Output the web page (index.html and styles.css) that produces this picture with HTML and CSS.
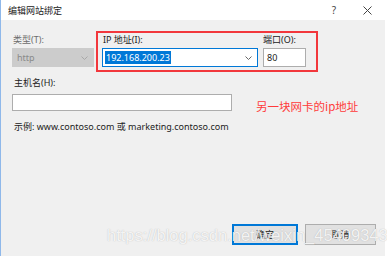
FILE: index.html
```html
<!DOCTYPE html>
<html>
<head>
<meta charset="utf-8">
<link rel="stylesheet" href="styles.css">
</head>
<body>
<div class="window">
  <div class="titlebar">
    <span class="title">编辑网站绑定</span>
    <span class="tb-btn help">?</span>
    <span class="tb-btn close">
      <svg width="9" height="9" viewBox="0 0 9 9"><path d="M0.5 0.5L8.5 8.5M8.5 0.5L0.5 8.5" stroke="#444" stroke-width="1"/></svg>
    </span>
  </div>
  <div class="content">
    <div class="row1">
      <div class="field type">
        <label>类型(T):</label>
        <div class="select disabled"><span>http</span>
          <svg class="chev" width="7" height="4" viewBox="0 0 7 4"><path d="M0.5 0.5L3.5 3.5L6.5 0.5" fill="none" stroke="#a8a8a8"/></svg>
        </div>
      </div>
      <div class="redbox">
        <div class="field ip">
          <label>IP 地址(I):</label>
          <div class="select active"><span class="sel">192.168.200.23</span>
            <svg class="chev" width="7" height="4" viewBox="0 0 7 4"><path d="M0.5 0.5L3.5 3.5L6.5 0.5" fill="none" stroke="#666"/></svg>
          </div>
        </div>
        <div class="field port">
          <label>端口(O):</label>
          <div class="input"><span>80</span></div>
        </div>
      </div>
    </div>
    <div class="row2">
      <label>主机名(H):</label>
      <div class="hostline">
        <div class="input host"></div>
        <span class="note">另一块网卡的ip地址</span>
      </div>
      <div class="example">示例: www.contoso.com 或 marketing.contoso.com</div>
    </div>
    <div class="buttons">
      <div class="btn default">确定</div>
      <div class="btn">取消</div>
    </div>
  </div>
  <div class="watermark">https://blog.csdn.net/weixin_45409343</div>
</div>
</body>
</html>
```
FILE: styles.css
```css
* { box-sizing: border-box; }
html, body { margin: 0; padding: 0; }
body {
  width: 387px; height: 256px; overflow: hidden;
  font-family: "Noto Sans", "Noto Sans CJK SC", sans-serif;
  font-size: 9px; color: #222;
}
.window {
  position: relative;
  width: 387px; height: 256px;
  background: #f0f0f0;
  border-left: 1px solid #8fb8ea;
  border-right: 2px solid #fff;
  display: flex; flex-direction: column;
}
.titlebar {
  height: 20px; background: #fff;
  display: flex; align-items: center;
  padding-left: 7px;
}
.title { font-size: 9px; color: #222; flex: 1; }
.tb-btn { display: flex; align-items: center; justify-content: center; color: #444; }
.help { width: 10px; margin-right: 23px; font-size: 10px; }
.close { width: 10px; margin-right: 13px; }
.content { flex: 1; display: flex; flex-direction: column; padding: 11px 0 11px 11px; }
.row1 { display: flex; align-items: flex-start; }
.field { display: flex; flex-direction: column; }
label { display: block; height: 13px; line-height: 13px; font-size: 9px; color: #222; }
.field label { margin-bottom: 2px; }
.type { width: 82px; padding-top: 2px; margin-right: 2px; }
.type label { color: #6d6d6d; padding-left: 1px; }
.select {
  height: 19px; display: flex; align-items: center; justify-content: space-between;
  padding: 0 5px 0 2px; border: 1px solid #adadad; background: #fff;
}
.select.disabled { background: #cccccc; border-color: #cccccc; color: #8a8a8a; padding-left: 4px; }
.select.active { border-color: #0078d7; }
.sel { background: #0078d7; color: #fff; line-height: 13px; padding: 0 1px; }
.redbox {
  width: 222px; height: 41px;
  border: 2px solid #f2373c;
  display: flex; padding: 0 0 0 4px;
}
.ip { width: 156px; margin-right: 5px; }
.ip label { padding-left: 1px; }
.port { width: 43px; }
.input { height: 19px; border: 1px solid #adadad; background: #fff; display: flex; align-items: center; padding-left: 3px; }
.row2 { margin-top: 4px; padding-left: 1px; }
.row2 label { margin-left: 1px; }
.hostline { display: flex; align-items: center; margin-top: 2px; margin-left: -1px; }
.host { width: 220px; height: 17px; }
.note {
  margin-left: 24px; margin-top: 7px;
  color: #ff3b3b; font-size: 11.5px;
  font-family: "Noto Sans CJK SC", "DejaVu Sans", sans-serif;
}
.example { margin-top: 6px; margin-left: 1px; font-size: 9px; color: #222; }
.buttons { margin-top: auto; display: flex; justify-content: flex-end; gap: 7px; padding-right: 9px; }
.btn {
  width: 71px; height: 21px; background: #e1e1e1; border: 1px solid #adadad;
  display: flex; align-items: center; justify-content: center; font-size: 9px;
}
.btn.default { width: 66px; border: 2px solid #0078d7; }
.watermark {
  position: absolute; left: 106px; top: 226px;
  font-family: "Liberation Sans", Arial, sans-serif; font-size: 16.5px;
  color: rgba(255,255,255,0.85);
  text-shadow: 0 0 1px rgba(120,120,120,0.5);
  white-space: nowrap; pointer-events: none;
}
```
